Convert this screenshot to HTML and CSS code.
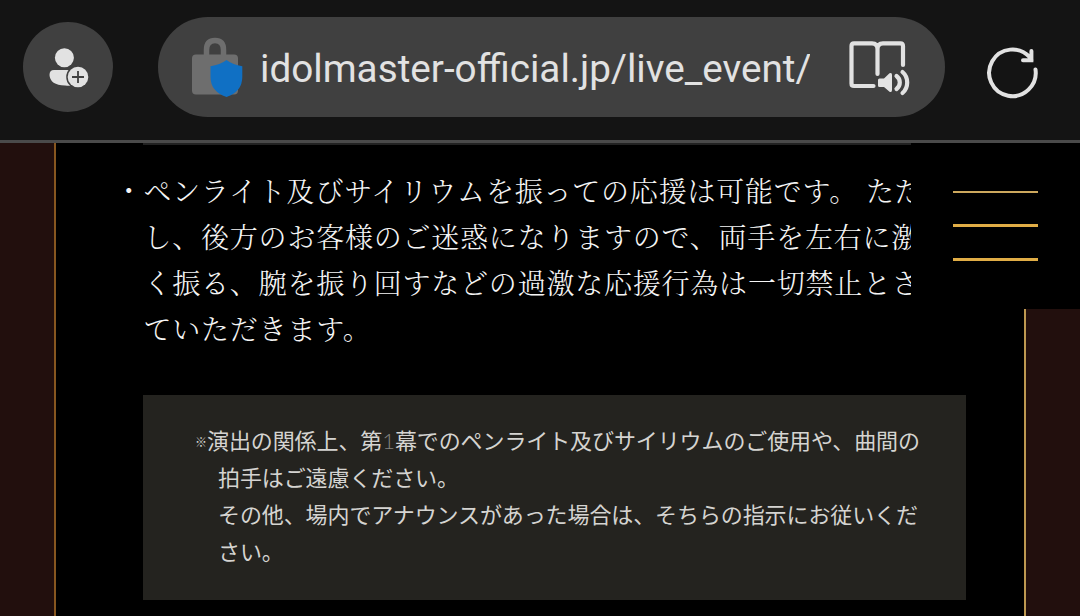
FILE: index.html
```html
<!DOCTYPE html>
<html lang="ja">
<head>
<meta charset="utf-8">
<title>idolmaster-official.jp</title>
<link rel="stylesheet" href="styles.css">
</head>
<body>
<header class="toolbar">
  <button class="profile" aria-label="Profile">
    <svg class="icon" width="90" height="90" viewBox="23 22 90 90">
      <circle cx="64.400" cy="57.700" r="9.500"/>
      <path d="M54 70H75V85.500Q70 86 65 85.600Q50 85 49.500 75Q49.500 70 54 70Z"/>
      <circle class="cutout" cx="78" cy="77" r="11.800"/>
      <circle cx="78" cy="77" r="10.300"/>
      <path class="plus" d="M72 77H84M78 71V83"/>
    </svg>
  </button>
  <div class="address">
    <svg class="lock" width="54" height="62" viewBox="190 36 54 62">
      <path class="shackle" d="M206.500 56V50Q206.500 40.500 215 40.500Q223.500 40.500 223.500 50V56"/>
      <rect class="lock-body" x="192" y="54.500" width="46" height="40" rx="4"/>
      <path class="shield" d="M226.500 60Q233 65 242.300 66.200V77Q242.300 91.500 226.500 97Q210.500 91.500 210.500 77V66.200Q220 65 226.500 60Z"/>
    </svg>
    <span class="url">idolmaster-official.jp/live_event/</span>
    <svg class="reader" width="64" height="60" viewBox="848 39 64 60">
      <path d="M873.500 86H854Q851.500 86 851.500 83.500V46Q851.500 43.300 854 43.300H872Q877.500 43.300 877.500 49V74M877.500 49Q877.500 43.300 883 43.300H900.500Q903 43.300 903 46V65"/>
      <path class="speaker" d="M879.500 78.500H884L889.500 73.300Q892 72 892 75V90Q892 93 889.500 91.700L884 87H879.500Q878 87 878 85.500V80Q878 78.500 879.500 78.500Z"/>
      <path d="M896.500 76Q899.800 78.500 899.800 82.500Q899.800 86.500 896.500 89M902.500 72Q907.200 76 907.200 82.500Q907.200 89 902.500 93"/>
    </svg>
  </div>
  <svg class="reload" width="56" height="56" viewBox="985 45 56 56">
    <path d="M1035.500 69.500A23.300 23.300 0 1 1 1030 57.500L1031.500 60M1031.400 51V60.200H1023"/>
  </svg>
</header>
<main class="page">
  <article class="content">
    <p class="rule-text"><span class="line first">・ペンライト及びサイリウムを振っての応援は可能です。 ただ</span><span class="line">し、後方のお客様のご迷惑になりますので、両手を左右に激し</span><span class="line">く振る、腕を振り回すなどの過激な応援行為は一切禁止とさせ</span><span class="line">ていただきます。</span></p>
    <p class="note"><span class="line lead"><span class="mark">※</span>演出の関係上、第<span class="numeral">1</span>幕でのペンライト及びサイリウムのご使用や、曲間の</span><span class="line">拍手はご遠慮ください。</span><span class="line">その他、場内でアナウンスがあった場合は、そちらの指示にお従いくだ</span><span class="line">さい。</span></p>
  </article>
  <nav class="menu" aria-label="Menu"><i class="bar thin"></i><i class="bar"></i><i class="bar"></i></nav>
</main>
</body>
</html>
```
FILE: styles.css
```css
* { box-sizing: border-box; }
body {
  margin: 0;
  width: 1080px;
  height: 616px;
  overflow: hidden;
  background: #000;
  display: flex;
  flex-direction: column;
}
.toolbar {
  flex: none;
  height: 143px;
  padding: 17px 0 0 23px;
  display: flex;
  align-items: flex-start;
  background: #141414;
  border-bottom: 3px solid #4a4a4a;
}
.profile {
  width: 90px;
  height: 90px;
  margin: 5px 45px 0 0;
  padding: 0;
  border: 0;
  border-radius: 50%;
  background: #404040;
}
.icon { display: block; fill: #e2e2e2; }
.icon .cutout { fill: #404040; }
.icon .plus { fill: none; stroke: #404040; stroke-width: 1.8; }
.address {
  width: 787px;
  height: 100px;
  padding: 19px 33px 0 32px;
  display: flex;
  border-radius: 50px;
  background: #404040;
}
.lock { flex: none; }
.shackle { fill: none; stroke: #6e6e6e; stroke-width: 5.5; }
.lock-body { fill: #6e6e6e; }
.shield { fill: #1070c4; }
.url {
  width: 550px;
  margin: 5px 38px 0 16px;
  overflow: hidden;
  white-space: nowrap;
  color: #e2e2e2;
  font: 38.700px/56px Roboto, sans-serif;
}
.reader, .reload {
  flex: none;
  fill: none;
  stroke: #e2e2e2;
  stroke-width: 4.2;
  stroke-linecap: round;
}
.reader { margin-top: 3px; }
.reader .speaker { fill: #e2e2e2; stroke: none; }
.reload { margin: 28px 0 0 40px; stroke-width: 4; }
.page {
  flex: 1;
  position: relative;
  padding: 0 54px;
  background: #220f0d;
}
.content {
  height: 100%;
  padding: 0 58px 0 61px;
  overflow: hidden;
  border-left: 2px solid #87561f;
  border-right: 2px solid #bd9850;
  background: #000;
}
.line { display: block; white-space: nowrap; }
.rule-text {
  width: 794px;
  height: 252px;
  margin: 0;
  padding: 24px 0 0 26.500px;
  overflow: hidden;
  color: #f5f5f5;
  background: linear-gradient(#222, #222) 26px 0 / 768px 2px no-repeat;
  font: 300 28px/46px "Noto Serif CJK JP", "Noto Sans CJK JP", serif;
  letter-spacing: .78px;
}
.rule-text .first { margin-left: -28.800px; letter-spacing: .79px; }
.note {
  width: 823px;
  height: 205px;
  margin: 0 0 0 26px;
  padding: 26px 0 0 75px;
  color: #d5d4d1;
  background: #24231f;
  font: 22px/37px "Noto Sans CJK JP", sans-serif;
  letter-spacing: -.1px;
}
.note .line { height: 37px; }
.note .lead { margin-left: -23px; }
.mark { font-size: 12px; letter-spacing: 0; vertical-align: 2px; line-height: 1; }
.numeral { font-family: Lato, sans-serif; font-weight: 300; color: #858480; }
.menu {
  position: absolute;
  top: 0;
  right: 0;
  width: 169px;
  height: 166px;
  padding: 48px 42px 0;
  display: flex;
  flex-direction: column;
  gap: 31px;
  background: #000;
}
.bar { display: block; height: 3px; background: #e0ad46; }
.bar.thin { height: 2px; background: #cda85d; }
```
